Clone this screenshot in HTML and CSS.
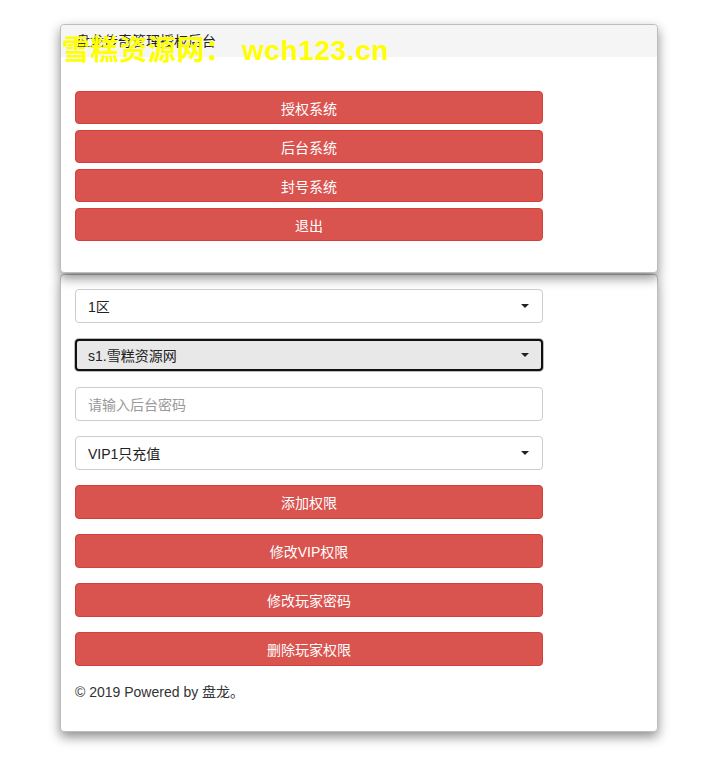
FILE: index.html
```html
<!DOCTYPE html>
<html lang="zh-CN">
<head>
<meta charset="utf-8">
<title>盘龙传奇管理授权后台</title>
<link rel="stylesheet" href="styles.css">
</head>
<body>
<div class="page">
  <div class="panel panel-top">
    <div class="panel-heading">盘龙传奇管理授权后台</div>
    <div class="panel-body top-body">
      <div class="btn-stack">
        <button class="btn">授权系统</button>
        <button class="btn">后台系统</button>
        <button class="btn">封号系统</button>
        <button class="btn">退出</button>
      </div>
    </div>
  </div>
  <div class="panel panel-bottom">
    <div class="panel-body form-body">
      <div class="field select"><span>1区</span><i class="caret"></i></div>
      <div class="field select focused"><span>s1.雪糕资源网</span><i class="caret"></i></div>
      <div class="field input"><span class="ph">请输入后台密码</span></div>
      <div class="field select"><span>VIP1只充值</span><i class="caret"></i></div>
      <button class="btn btn-tall">添加权限</button>
      <button class="btn btn-tall">修改VIP权限</button>
      <button class="btn btn-tall">修改玩家密码</button>
      <button class="btn btn-tall">删除玩家权限</button>
      <p class="footer">© 2019 Powered by 盘龙。</p>
    </div>
  </div>
  <div class="watermark">雪糕资源网： wch123.cn</div>
</div>
</body>
</html>
```
FILE: styles.css
```css
* { box-sizing: border-box; }
html, body { margin: 0; padding: 0; background: #fff; }
body {
  font-family: "Liberation Sans", Arial, "Noto Sans CJK SC", sans-serif;
  font-size: 14px;
  color: #333;
}
.page {
  position: relative;
  width: 598px;
  margin-left: 60px;
  padding-top: 24px;
  padding-bottom: 32px;
}
.panel {
  background: #fff;
  border: 1px solid #bdbdbd;
  border-radius: 4px;
  box-shadow: 0 5px 12px rgba(0,0,0,0.45);
}
.panel-top { height: 249px; position: relative; z-index: 1; }
.panel-bottom { margin-top: 1px; height: 458px; }
.panel-heading {
  background: #f5f5f5;
  height: 32px;
  padding: 6px 15px 0;
  line-height: 20px;
  border-radius: 4px 4px 0 0;
  color: #222;
}
.top-body { padding: 34px 14px 0; }
.btn-stack { display: flex; flex-direction: column; gap: 6px; }
.btn {
  display: block;
  width: 468px;
  height: 33px;
  border: 1px solid #d43f3a;
  border-radius: 4px;
  background: #d9534f;
  color: #fff;
  font-family: inherit;
  font-size: 14px;
  padding: 0;
  cursor: pointer;
}
.btn-tall { height: 34px; }
.form-body {
  padding: 14px 14px 0;
  display: flex;
  flex-direction: column;
  gap: 15px;
}
.field {
  width: 468px;
  height: 34px;
  border: 1px solid #ccc;
  border-radius: 4px;
  display: flex;
  align-items: center;
  justify-content: space-between;
  padding: 0 12px;
  color: #222;
}
.field.focused {
  background: #e8e8e8;
  border: 2px solid #111;
  box-shadow: 0 0 0 1px #bbb;
  padding: 0 11px;
  height: 32px;
  margin-top: 1px;
  margin-bottom: 1px;
}
.ph { color: #999; }
.caret {
  width: 0; height: 0;
  border-left: 4px solid transparent;
  border-right: 4px solid transparent;
  border-top: 4px solid #222;
  margin-right: 1px;
}
.footer { margin: 1px 0 0; line-height: 20px; color: #333; }
.watermark {
  position: absolute;
  z-index: 2;
  left: 2px;
  top: 33px;
  color: #ffff00;
  font-family: "Liberation Sans", "Noto Sans CJK SC", sans-serif;
  font-weight: bold;
  font-size: 28px;
  line-height: 36px;
  white-space: nowrap;
  letter-spacing: 0.6px;
}
```
